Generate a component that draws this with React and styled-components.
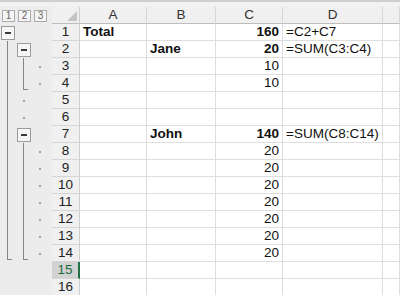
import React from "react";
import styled, { createGlobalStyle } from "styled-components";

const GlobalStyle = createGlobalStyle`
  html, body {
    margin: 0;
    padding: 0;
    background: #ffffff;
    overflow: hidden;
  }
  body {
    font-family: "Liberation Sans", Arial, sans-serif;
  }
`;

const COLS = "52px 28px 67px 69px 67px 100px 1fr";

const Sheet = styled.div`
  width: 400px;
  height: 295px;
  display: flex;
  flex-direction: column;
  overflow: hidden;
  background: #fff;
`;

const TopStrip = styled.div`
  height: 7px;
  flex: none;
  box-sizing: border-box;
  border-top: 2px solid #cfcfcf;
  background: #f2f2f2;
`;

const Row = styled.div`
  display: grid;
  grid-template-columns: ${COLS};
  height: 17px;
  flex: none;
`;

const HeaderRow = styled(Row)`
  background: #f0f0f0;
`;

const LevelBar = styled.div`
  display: flex;
  align-items: center;
  gap: 3px;
  padding-left: 2px;
  background: #ececec;
  box-sizing: border-box;
`;

const LevelButton = styled.div`
  width: 13px;
  height: 12px;
  box-sizing: border-box;
  border: 1px solid #ababab;
  background: #f5f5f5;
  color: #666666;
  font-size: 10px;
  line-height: 10px;
  text-align: center;
`;

const Corner = styled.div`
  position: relative;
  background: #f0f0f0;
  box-sizing: border-box;
  border-right: 1px solid #cfcfcf;
  border-bottom: 1px solid #bdbdbd;

  &::after {
    content: "";
    position: absolute;
    right: 2px;
    bottom: 2px;
    width: 0;
    height: 0;
    border-left: 10px solid transparent;
    border-bottom: 10px solid #c4c4c4;
  }
`;

const ColHead = styled.div`
  box-sizing: border-box;
  border-right: 1px solid #d6d6d6;
  border-bottom: 1px solid #bdbdbd;
  text-align: center;
  font-size: 13.5px;
  line-height: 16px;
  color: #333;
`;

const Outline = styled.div`
  display: flex;
  background: #ececec;
`;

const Lane = styled.div`
  position: relative;
  width: 16px;
  flex: none;
  display: flex;
  align-items: center;
`;

const Stem = styled.span`
  position: absolute;
  left: 7px;
  top: 0;
  bottom: ${(p) => (p.$end ? 2 : 0)}px;
  width: 1px;
  background: #858585;

  &::after {
    content: "";
    display: ${(p) => (p.$end ? "block" : "none")};
    position: absolute;
    left: 0;
    bottom: 0;
    width: 5px;
    height: 1px;
    background: #858585;
  }
`;

const Dot = styled.span`
  position: absolute;
  left: 7px;
  top: 8px;
  width: 2px;
  height: 2px;
  background: #a2a2a2;
`;

const Toggle = styled.span`
  position: relative;
  margin-left: 1px;
  width: 14px;
  height: 14px;
  box-sizing: border-box;
  border: 1px solid #9c9c9c;
  background: #f6f6f6;

  &::before {
    content: "";
    position: absolute;
    left: 3px;
    top: 5px;
    width: 6px;
    height: 2px;
    background: #3c3c3c;
  }
`;

const RowHead = styled.div`
  box-sizing: border-box;
  background: ${(p) => (p.$active ? "#d2d2d2" : "#f0f0f0")};
  color: ${(p) => (p.$active ? "#1d6b40" : "#222")};
  border-right: ${(p) => (p.$active ? "2px solid #217346" : "1px solid #cfcfcf")};
  border-bottom: 1px solid #d6d6d6;
  text-align: center;
  font-size: 13.5px;
  line-height: 16px;
`;

const Cell = styled.div`
  box-sizing: border-box;
  border-right: 1px solid #dedede;
  border-bottom: 1px solid #dedede;
  padding: 0 3px;
  font-size: 13.5px;
  line-height: 16px;
  color: #111;
  white-space: nowrap;
  overflow: visible;
  font-weight: ${(p) => (p.$bold ? 700 : 400)};
  text-align: ${(p) => (p.$num ? "right" : "left")};
`;

const lanePart = (kind) => {
  if (kind === "box") return <Toggle />;
  if (kind === "line") return <Stem />;
  if (kind === "end") return <Stem $end />;
  if (kind === "dot") return <Dot />;
  return null;
};

const rows = [
  { n: 1, o: ["box", "", ""], a: "Total", c: "160", d: "=C2+C7", bold: true },
  { n: 2, o: ["line", "box", ""], b: "Jane", c: "20", d: "=SUM(C3:C4)", bold: true },
  { n: 3, o: ["line", "line", "dot"], c: "10" },
  { n: 4, o: ["line", "end", "dot"], c: "10" },
  { n: 5, o: ["line", "dot", ""] },
  { n: 6, o: ["line", "dot", ""] },
  { n: 7, o: ["line", "box", ""], b: "John", c: "140", d: "=SUM(C8:C14)", bold: true },
  { n: 8, o: ["line", "line", "dot"], c: "20" },
  { n: 9, o: ["line", "line", "dot"], c: "20" },
  { n: 10, o: ["line", "line", "dot"], c: "20" },
  { n: 11, o: ["line", "line", "dot"], c: "20" },
  { n: 12, o: ["line", "line", "dot"], c: "20" },
  { n: 13, o: ["line", "line", "dot"], c: "20" },
  { n: 14, o: ["end", "end", "dot"], c: "20" },
  { n: 15, o: ["", "", ""] },
  { n: 16, o: ["", "", ""] },
];

export default function App() {
  return (
    <>
      <GlobalStyle />
      <Sheet>
        <TopStrip />
        <HeaderRow>
          <LevelBar>
            <LevelButton>1</LevelButton>
            <LevelButton>2</LevelButton>
            <LevelButton>3</LevelButton>
          </LevelBar>
          <Corner />
          <ColHead>A</ColHead>
          <ColHead>B</ColHead>
          <ColHead>C</ColHead>
          <ColHead>D</ColHead>
          <ColHead />
        </HeaderRow>
        {rows.map((r) => (
          <Row key={r.n}>
            <Outline>
              {r.o.map((k, i) => (
                <Lane key={i}>{lanePart(k)}</Lane>
              ))}
            </Outline>
            <RowHead $active={r.n === 15}>{r.n}</RowHead>
            <Cell $bold={r.bold}>{r.a}</Cell>
            <Cell $bold={r.bold}>{r.b}</Cell>
            <Cell $num $bold={r.bold}>{r.c}</Cell>
            <Cell>{r.d}</Cell>
            <Cell />
          </Row>
        ))}
      </Sheet>
    </>
  );
}
